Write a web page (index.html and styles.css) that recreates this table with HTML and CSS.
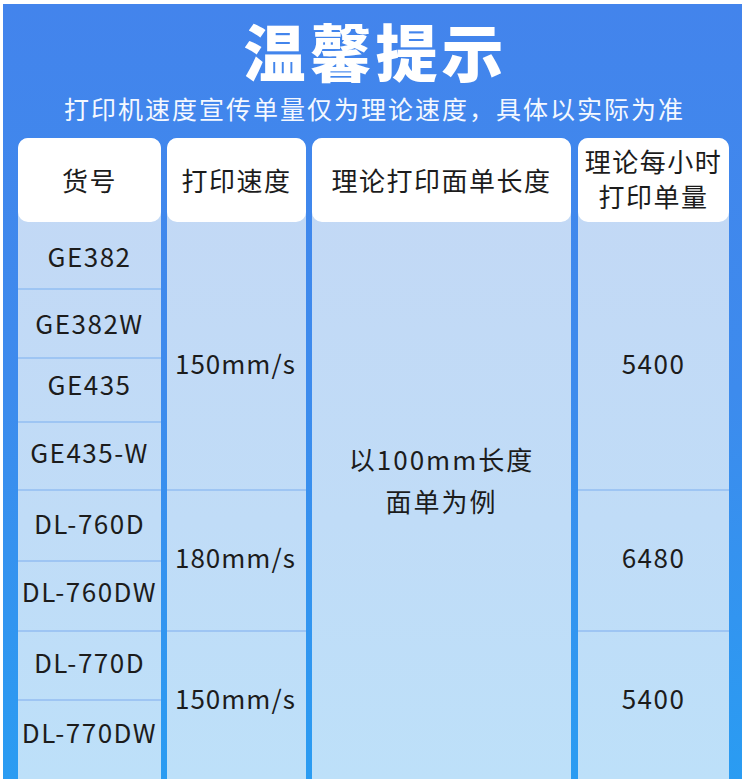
FILE: index.html
```html
<!DOCTYPE html>
<html lang="zh-CN">
<head>
<meta charset="utf-8">
<title>温馨提示</title>
<link rel="stylesheet" href="styles.css">
</head>
<body>
<div class="panel">
  <h1 class="title">温馨提示</h1>
  <p class="subtitle">打印机速度宣传单量仅为理论速度，具体以实际为准</p>
  <div class="table">
    <div class="col col-model">
      <div class="head">货号</div>
      <div class="body">
        <div class="cell r1">GE382</div>
        <div class="cell r2">GE382W</div>
        <div class="cell r3">GE435</div>
        <div class="cell r4">GE435-W</div>
        <div class="cell r5">DL-760D</div>
        <div class="cell r6">DL-760DW</div>
        <div class="cell r7">DL-770D</div>
        <div class="cell r8">DL-770DW</div>
      </div>
    </div>
    <div class="col col-speed">
      <div class="head">打印速度</div>
      <div class="body">
        <div class="cell g1">150mm/s</div>
        <div class="cell g2">180mm/s</div>
        <div class="cell g3">150mm/s</div>
      </div>
    </div>
    <div class="col col-len">
      <div class="head">理论打印面单长度</div>
      <div class="body">
        <div class="cell all">以100mm长度<br>面单为例</div>
      </div>
    </div>
    <div class="col col-qty">
      <div class="head two">理论每小时<br>打印单量</div>
      <div class="body">
        <div class="cell g1">5400</div>
        <div class="cell g2">6480</div>
        <div class="cell g3">5400</div>
      </div>
    </div>
  </div>
</div>
</body>
</html>
```

FILE: styles.css
```css
* { box-sizing: border-box; }
html, body { margin: 0; padding: 0; }
body {
  background: #ffffff;
  width: 750px;
  height: 779px;
  overflow: hidden;
  font-family: "Noto Sans CJK SC", "Noto Sans", sans-serif;
}
.panel {
  margin: 4px 0 0 3px;
  width: 739px;
  height: 775px;
  background: linear-gradient(180deg, #4384ec 0%, #3d8bed 50%, #2a9cf2 100%);
  padding: 13px 13px 0 15px;
  display: flex;
  flex-direction: column;
}
.title {
  margin: 0;
  height: 66px;
  line-height: 66px;
  text-align: center;
  color: #ffffff;
  font-size: 62px;
  font-weight: 900;
  letter-spacing: 4px;
  padding-left: 4px;
}
.subtitle {
  margin: 10px 0 0;
  height: 30px;
  line-height: 30px;
  text-align: center;
  color: #f4f8ff;
  font-size: 25px;
  letter-spacing: 2px;
  padding-left: 2px;
}
.table {
  margin-top: 15px;
  flex: 1;
  display: flex;
  gap: 6px;
}
.col {
  display: flex;
  flex-direction: column;
  background: linear-gradient(180deg, #c3d8f5 0%, #c0dcf7 60%, #bde0f9 100%);
  border-radius: 10px 10px 0 0;
  color: #1c1c1c;
}
.col-model { width: 143px; }
.col-speed { width: 139px; }
.col-len { width: 259px; margin-right: 1px; }
.col-qty { width: 151px; }
.head {
  height: 84px;
  background: #ffffff;
  border-radius: 10px;
  display: flex;
  align-items: center;
  justify-content: center;
  text-align: center;
  font-size: 26px;
  letter-spacing: 1.5px;
  padding-bottom: 2px;
}
.head.two {
  line-height: 35px;
  padding-bottom: 4px;
}
.body {
  flex: 1;
  display: flex;
  flex-direction: column;
}
.cell {
  display: flex;
  align-items: center;
  justify-content: center;
  text-align: center;
  font-size: 26px;
  letter-spacing: 1.5px;
  border-top: 2px solid #9ec5f3;
}
.cell:first-child { border-top: 0; }
.r1 { height: 66px; }
.r2 { height: 69px; padding-bottom: 2px; }
.r3 { height: 64px; padding-bottom: 14px; }
.r4 { height: 68px; padding-bottom: 10px; }
.r5 { height: 71px; padding-bottom: 6px; }
.r6 { height: 70px; padding-bottom: 12px; }
.r7 { height: 69px; padding-bottom: 8px; }
.r8 { flex: 1; padding-bottom: 18px; }
.g1 { height: 267px; padding-top: 14px; }
.g2 { height: 141px; padding-bottom: 8px; }
.g3 { flex: 1; padding-bottom: 16px; }
.all {
  flex: 1;
  line-height: 42px;
  padding-bottom: 42px;
  letter-spacing: 2px;
}
.col-speed .cell { justify-content: flex-start; padding-left: 8px; letter-spacing: 1px; }
```
